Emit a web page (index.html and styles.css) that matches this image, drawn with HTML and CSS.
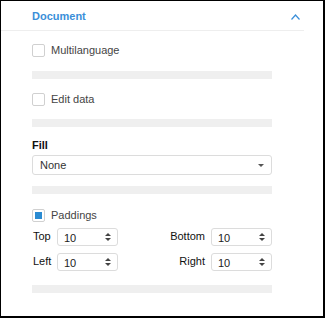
FILE: index.html
```html
<!DOCTYPE html>
<html lang="en">
<head>
  <meta charset="UTF-8" />
  <title>Document settings</title>
  <link rel="stylesheet" href="styles.css">
</head>
<body>

  <div class="panel">
    <!-- Header -->
    <div class="panel-head">
      <span class="panel-title">Document</span>
      <svg class="chevron" width="9" height="6" viewBox="0 0 9 6">
        <polyline points="0.5,5.5 4.5,1 8.5,5.5" fill="none" stroke="#3b8fd9" stroke-width="1.2" />
      </svg>
    </div>

    <div class="panel-body">
      <label class="check-row first">
        <span class="check"></span>
        <span>Multilanguage</span>
      </label>
      <div class="bar"></div>

      <label class="check-row">
        <span class="check"></span>
        <span>Edit data</span>
      </label>
      <div class="bar bar-tight"></div>

      <div class="field-title">Fill</div>
      <div class="select">
        <span>None</span>
        <span class="caret"></span>
      </div>
      <div class="bar bar-after-select"></div>

      <label class="check-row paddings">
        <span class="check checked"></span>
        <span>Paddings</span>
      </label>

      <div class="spin-row">
        <div class="spin-field">
          <span class="spin-label">Top</span>
          <div class="spin"><span>10</span><span class="arrows"><i class="up"></i><i class="down"></i></span></div>
        </div>
        <div class="spin-field right">
          <span class="spin-label">Bottom</span>
          <div class="spin"><span>10</span><span class="arrows"><i class="up"></i><i class="down"></i></span></div>
        </div>
      </div>
      <div class="spin-row second">
        <div class="spin-field">
          <span class="spin-label">Left</span>
          <div class="spin"><span>10</span><span class="arrows"><i class="up"></i><i class="down"></i></span></div>
        </div>
        <div class="spin-field right">
          <span class="spin-label">Right</span>
          <div class="spin"><span>10</span><span class="arrows"><i class="up"></i><i class="down"></i></span></div>
        </div>
      </div>
      <div class="bar bar-last"></div>
    </div>
  </div>

</body>
</html>
```

FILE: styles.css
```css
body {
  margin: 0;
  font-family: 'Liberation Sans', Arial, sans-serif;
  font-size: 11px;
  background-color: #ffffff;
  color: #222;
}

.panel {
  width: 325px;
  height: 318px;
  box-sizing: border-box;
  border: 1px solid #000;
  border-right-width: 2px;
  border-bottom-width: 2px;
  overflow: hidden;
}

.panel-head {
  height: 29px;
  margin-right: 19px;
  padding: 0 4px 0 31px;
  border-bottom: 1px solid #eeeeee;
  display: flex;
  align-items: center;
  justify-content: space-between;
}

.panel-title {
  color: #3b8fd9;
  font-weight: bold;
  margin-top: 1px;
}

.chevron {
  display: block;
  margin-top: 3px;
}

.panel-body {
  width: 240px;
  padding-left: 31px;
}

.check-row {
  display: flex;
  align-items: center;
  height: 13px;
  margin-top: 14px;
  color: #444;
  line-height: 13px;
}

.check-row.first {
  margin-top: 13px;
}

.check {
  width: 11px;
  height: 11px;
  border: 1px solid #d0d0d0;
  border-radius: 2px;
  margin-right: 6px;
  display: flex;
  align-items: center;
  justify-content: center;
}

.check.checked::after {
  content: "";
  width: 7px;
  height: 7px;
  background-color: #2b8bd2;
}

.bar {
  height: 8px;
  background-color: #efefef;
  margin-top: 14px;
}

.bar-tight {
  margin-top: 13px;
}

.field-title {
  font-weight: bold;
  color: #111;
  line-height: 13px;
  margin-top: 12px;
}

.select {
  height: 18px;
  margin-top: 3px;
  border: 1px solid #dcdcdc;
  border-radius: 3px;
  padding: 0 7px 0 7px;
  display: flex;
  align-items: center;
  justify-content: space-between;
  color: #333;
}

.caret {
  width: 0;
  height: 0;
  border-left: 3px solid transparent;
  border-right: 3px solid transparent;
  border-top: 3px solid #555;
}

.bar-after-select {
  margin-top: 11px;
}

.check-row.paddings {
  margin-top: 15px;
}

.spin-row {
  display: flex;
  align-items: center;
  margin-top: 6px;
}

.spin-row.second {
  margin-top: 7px;
}

.spin-field {
  display: flex;
  align-items: center;
}

.spin-field.right {
  margin-left: auto;
}

.spin-label {
  width: 25px;
  padding-left: 1px;
  box-sizing: border-box;
  color: #111;
  margin-top: -3px;
}

.spin-field.right .spin-label {
  width: auto;
  padding-left: 0;
  margin-right: 6px;
}

.spin {
  width: 57px;
  height: 16px;
  border: 1px solid #dcdcdc;
  border-radius: 3px;
  display: flex;
  align-items: center;
  justify-content: space-between;
  padding: 0 6px 0 6px;
  box-sizing: content-box;
  width: 47px;
  color: #222;
}

.spin span:first-child {
  margin-top: 2px;
}

.arrows {
  display: flex;
  flex-direction: column;
  gap: 2px;
}

.arrows i {
  display: block;
  width: 0;
  height: 0;
  border-left: 3px solid transparent;
  border-right: 3px solid transparent;
}

.arrows .up {
  border-bottom: 3px solid #444;
}

.arrows .down {
  border-top: 3px solid #444;
}

.bar-last {
  margin-top: 14px;
}
```
